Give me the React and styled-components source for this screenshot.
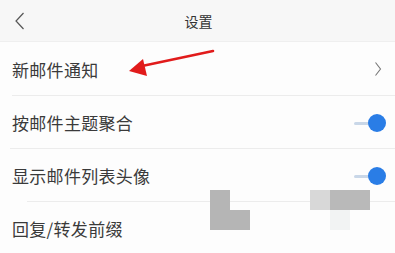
import React from 'react'
import styled, { createGlobalStyle } from 'styled-components'

const GlobalStyle = createGlobalStyle`
  html, body {
    margin: 0;
    padding: 0;
    background: #fdfdfd;
    font-family: "Noto Sans CJK SC", "Noto Sans", sans-serif;
  }
`

const Page = styled.div`
  position: relative;
  width: 395px;
  height: 253px;
  overflow: hidden;
  background: #fdfdfd;
`

const Header = styled.div`
  height: 42px;
  display: flex;
  align-items: center;
  justify-content: center;
  position: relative;
  background: #f7f7f7;
  border-bottom: 1px solid #efefef;
  box-sizing: border-box;
`

const BackButton = styled.div`
  position: absolute;
  left: 14px;
  top: 11px;
  width: 14px;
  height: 20px;
`

const Title = styled.div`
  font-size: 14px;
  color: #333;
  margin-left: 2px;
`

const List = styled.div`
  display: flex;
  flex-direction: column;
`

const Row = styled.div`
  height: ${p => p.h}px;
  display: flex;
  align-items: center;
  justify-content: space-between;
  padding: 0 12px;
  position: relative;
  box-sizing: border-box;
  &::after {
    content: '';
    display: ${p => (p.last ? 'none' : 'block')};
    position: absolute;
    left: ${p => p.inset}px;
    right: 0;
    bottom: 0;
    height: 1px;
    background: #ececec;
  }
`

const Label = styled.div`
  font-size: 17px;
  color: #3a3a3a;
  letter-spacing: 0.3px;
`

const Toggle = styled.div`
  position: relative;
  width: 32px;
  height: 18px;
  margin-right: -3px;
  &::before {
    content: '';
    position: absolute;
    left: 0;
    top: 8px;
    width: 16px;
    height: 3px;
    border-radius: 2px;
    background: #c9d7e8;
  }
  &::after {
    content: '';
    position: absolute;
    right: 0;
    top: 0;
    width: 18px;
    height: 18px;
    border-radius: 50%;
    background: #2a7de6;
  }
`

const Block = styled.div`
  position: absolute;
  left: ${p => p.x}px;
  top: ${p => p.y}px;
  width: ${p => p.w}px;
  height: ${p => p.h}px;
  background: ${p => p.c};
`

const Arrow = styled.svg`
  position: absolute;
  left: 0;
  top: 0;
  pointer-events: none;
`

export default function App() {
  return (
    <Page>
      <GlobalStyle />
      <Header>
        <BackButton>
          <svg width="14" height="20" viewBox="0 0 14 20">
            <path d="M9.5 2 L2 10 L9.5 18" fill="none" stroke="#555" strokeWidth="1.2" />
          </svg>
        </BackButton>
        <Title>设置</Title>
      </Header>
      <List>
        <Row h={54} inset={12}>
          <Label>新邮件通知</Label>
          <svg width="8" height="16" viewBox="0 0 8 16" style={{ marginRight: 1 }}>
            <path d="M1.5 1.5 L6.5 8 L1.5 14.5" fill="none" stroke="#777" strokeWidth="1.1" />
          </svg>
        </Row>
        <Row h={53} inset={10}>
          <Label>按邮件主题聚合</Label>
          <Toggle />
        </Row>
        <Row h={53} inset={27}>
          <Label>显示邮件列表头像</Label>
          <Toggle />
        </Row>
        <Row h={52} inset={12} last>
          <Label>回复/转发前缀</Label>
        </Row>
      </List>
      <Block x={210} y={190} w={20} h={20} c="#b5b5b5" />
      <Block x={210} y={210} w={40} h={20} c="#b5b5b5" />
      <Block x={310} y={190} w={20} h={20} c="#d8d8d8" />
      <Block x={330} y={190} w={40} h={20} c="#b9b9b9" />
      <Block x={330} y={210} w={20} h={20} c="#f2f3f3" />
      <Arrow width="395" height="253" viewBox="0 0 395 253">
        <path d="M213 51 L142 66" stroke="#e11b1b" strokeWidth="2.6" strokeLinecap="round" />
        <path d="M129 71 L143 59 L147 76 Z" fill="#e11b1b" />
      </Arrow>
    </Page>
  )
}
